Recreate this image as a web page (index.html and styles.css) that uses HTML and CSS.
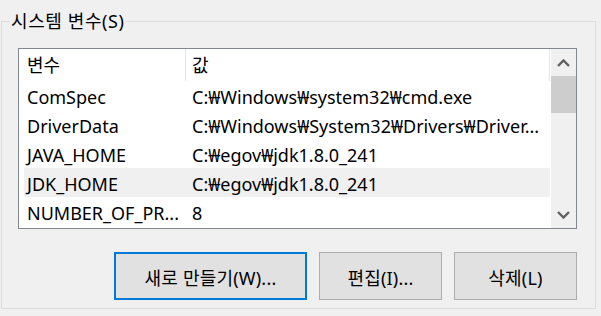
FILE: index.html
```html
<!DOCTYPE html>
<html lang="ko">
<head>
    <meta charset="UTF-8">
    <title>시스템 변수</title>
    <link rel="stylesheet" href="styles.css">
</head>
<body>
    <fieldset class="group">
        <legend>시스템 변수(S)</legend>

        <div class="listbox">
            <div class="list">
                <div class="row header">
                    <div class="col name">변수</div>
                    <div class="col value">값</div>
                </div>
                <div class="row">
                    <div class="col name">ComSpec</div>
                    <div class="col value">C:₩Windows₩system32₩cmd.exe</div>
                </div>
                <div class="row">
                    <div class="col name">DriverData</div>
                    <div class="col value">C:₩Windows₩System32₩Drivers₩Driver...</div>
                </div>
                <div class="row">
                    <div class="col name">JAVA_HOME</div>
                    <div class="col value">C:₩egov₩jdk1.8.0_241</div>
                </div>
                <div class="row hover">
                    <div class="col name">JDK_HOME</div>
                    <div class="col value">C:₩egov₩jdk1.8.0_241</div>
                </div>
                <div class="row">
                    <div class="col name">NUMBER_OF_PR...</div>
                    <div class="col value">8</div>
                </div>
            </div>
            <div class="scrollbar">
                <div class="arrow">
                    <svg width="13" height="8" viewBox="0 0 13 8"><path d="M1 7 L6.5 1.5 L12 7" fill="none" stroke="#606060" stroke-width="2.4"/></svg>
                </div>
                <div class="thumb"></div>
                <div class="track"></div>
                <div class="arrow">
                    <svg width="13" height="8" viewBox="0 0 13 8"><path d="M1 1 L6.5 6.5 L12 1" fill="none" stroke="#606060" stroke-width="2.4"/></svg>
                </div>
            </div>
        </div>

        <div class="buttons">
            <button class="btn default">새로 만들기(W)...</button>
            <button class="btn">편집(I)...</button>
            <button class="btn">삭제(L)</button>
        </div>
    </fieldset>
</body>
</html>
```

FILE: styles.css
```css
html, body {
    height: 316px;
    overflow: hidden;
}

body {
    margin: 0;
    background: #f0f0f0;
    font-family: "Noto Sans", "Noto Sans CJK KR", sans-serif;
    font-size: 18px;
    color: #000;
}

.group {
    margin: 9px 5px 0 1px;
    padding: 15px 18px 0 16px;
    border: 1px solid #dcdcdc;
    height: 300px;
    box-sizing: border-box;
}

.group legend {
    margin-left: -8px;
    padding: 0 1px;
    line-height: 24px;
    letter-spacing: 0.6px;
}

.listbox {
    display: flex;
    width: 557px;
    height: 179px;
    border: 1px solid #828790;
    background: #fff;
}

.list {
    flex: 1;
}

.row {
    display: flex;
    height: 29px;
    align-items: center;
    margin-left: 5px;
    padding-top: 2px;
    box-sizing: border-box;
}

.row.header {
    height: 32px;
    margin-left: 0;
    padding-top: 0;
}

.row.hover {
    background: #f0f0f0;
}

.col {
    white-space: nowrap;
    overflow: hidden;
}

.col.name {
    width: 158px;
    padding-left: 3px;
}

.col.value {
    padding-left: 7px;
}

.header .col {
    height: 32px;
    line-height: 32px;
}

.header .col.name {
    width: 158px;
    padding-left: 8px;
    border-right: 1px solid #e5e5e5;
}

.header .col.value {
    flex: 1;
    border-right: 1px solid #e5e5e5;
    padding-left: 6px;
}

.scrollbar {
    width: 25px;
    margin-left: 1px;
    background: #f0f0f0;
    display: flex;
    flex-direction: column;
}

.arrow {
    height: 27px;
    display: flex;
    align-items: center;
    justify-content: center;
}

.thumb {
    height: 37px;
    background: #cdcdcd;
}

.track {
    flex: 1;
}

.buttons {
    display: flex;
    justify-content: flex-end;
    gap: 12px;
    margin-top: 23px;
    width: 559px;
}

.btn {
    font-family: inherit;
    font-size: 18px;
    letter-spacing: 0.2px;
    color: #000;
    height: 48px;
    width: 123px;
    background: #e1e1e1;
    border: 1px solid #adadad;
    padding: 2px 0 0;
}

.btn.default {
    width: 193px;
    border: 2px solid #0078d7;
}
```
